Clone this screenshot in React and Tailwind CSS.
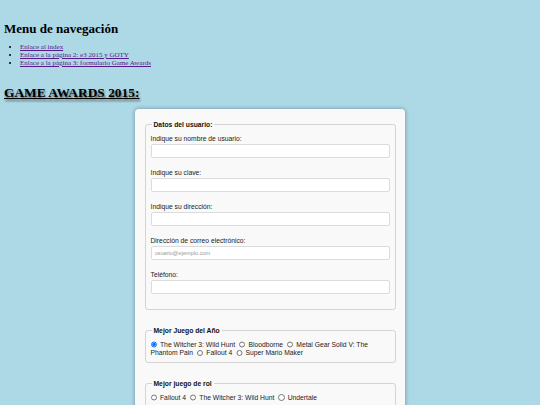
import React from 'react';

const fields = [
  { label: 'Indique su nombre de usuario:', type: 'text' },
  { label: 'Indique su clave:', type: 'password' },
  { label: 'Indique su dirección:', type: 'text' },
  { label: 'Dirección de correo electrónico:', type: 'email', placeholder: 'usuario@ejemplo.com' },
  { label: 'Teléfono:', type: 'tel' },
];

const goty = ['The Witcher 3: Wild Hunt', 'Bloodborne', 'Metal Gear Solid V: The Phantom Pain', 'Fallout 4', 'Super Mario Maker'];
const rpg = ['Fallout 4', 'The Witcher 3: Wild Hunt', 'Undertale'];
const action = ['Bayonetta 2', 'Bloodborne', 'Metal Gear Solid V: The Phantom Pain'];

const RadioGroup = ({ title, name, options, checked }) => (
  <fieldset className="mt-[16px] border border-[#d4d4d4] rounded-[3px] px-[5px] pt-[6px] pb-[4px]">
    <legend className="ml-[1px] px-[2px] text-[6.75px] leading-[9px] font-bold text-[#111]">{title}</legend>
    <div className="text-[6.75px] leading-[8.5px] text-[#222]">
      {options.map((opt, i) => (
        <React.Fragment key={opt}>
          <input
            type="radio"
            name={name}
            defaultChecked={i === checked}
            className="w-[6.5px] h-[6.5px] mr-[3px] ml-0 align-[-1px] accent-[#0075ff]"
          />
          <span className="mr-[2px]">{opt}</span>{' '}
        </React.Fragment>
      ))}
    </div>
  </fieldset>
);

export default function App() {
  return (
    <div className="min-h-screen bg-[#add8e6] px-[4px] pb-[20px] font-['Liberation_Serif',serif] text-black">
      {/* Menu */}
      <h2 className="pt-[21px] text-[13px] leading-[16px] font-bold">Menu de navegación</h2>
      <ul className="mt-[6px] pl-[16px] list-disc text-[7px] leading-[8px]">
        <li><a href="#" className="text-[#551a8b] underline">Enlace al index</a></li>
        <li><a href="#" className="text-[#551a8b] underline">Enlace a la página 2: e3 2015 y GOTY</a></li>
        <li><a href="#" className="text-[#551a8b] underline">Enlace a la página 3: formulario Game Awards</a></li>
      </ul>

      <h1 className="mt-[16px] text-[13.4px] leading-[20px] font-bold underline [text-shadow:1px_2px_2px_rgba(0,0,0,0.6)]">
        GAME AWARDS 2015:
      </h1>

      {/* Form card */}
      <form className="mx-auto mt-[6px] w-[270px] bg-[#f9f9f9] rounded-[4px] shadow-[0_0_4px_rgba(0,0,0,0.35)] px-[9.5px] pt-[10.5px] pb-[14px] font-['Liberation_Sans',Arial,sans-serif]">
        <fieldset className="border border-[#d4d4d4] rounded-[3px] px-[5px] pt-[5px] pb-[5px]">
          <legend className="ml-[1px] px-[2px] text-[6.75px] leading-[9px] font-bold text-[#111]">Datos del usuario:</legend>
          {fields.map((f) => (
            <div key={f.label} className="mb-[9.5px]">
              <label className="block text-[6.75px] leading-[9px] text-[#222]">{f.label}</label>
              <input
                type={f.type}
                placeholder={f.placeholder}
                className="block w-full mt-[1.5px] h-[14px] bg-white border border-[#dcdcdc] rounded-[2px] px-[3px] text-[5.6px] placeholder:text-[#999] outline-none"
              />
            </div>
          ))}
        </fieldset>

        <RadioGroup title="Mejor Juego del Año" name="goty" options={goty} checked={0} />
        <RadioGroup title="Mejor juego de rol" name="rpg" options={rpg} checked={-1} />
        <RadioGroup title="Mejor juego de acción" name="accion" options={action} checked={-1} />
      </form>
    </div>
  );
}
